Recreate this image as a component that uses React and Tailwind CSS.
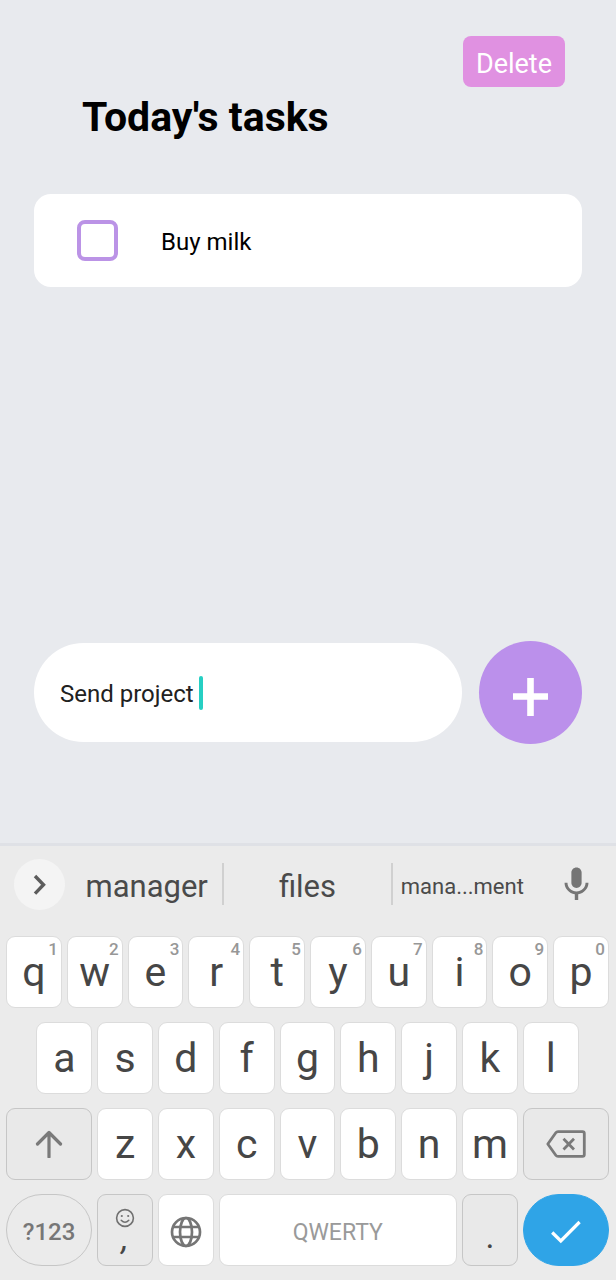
import React, { useState } from "react";
import { MdMic } from "react-icons/md";

const ROBOTO = "font-['Roboto',sans-serif]";

const topRow = ["q", "w", "e", "r", "t", "y", "u", "i", "o", "p"];
const homeRow = ["a", "s", "d", "f", "g", "h", "j", "k", "l"];
const bottomRow = ["z", "x", "c", "v", "b", "n", "m"];

function Key({ children, className = "col-span-2", tone = "light", label }) {
  const tones = {
    light: "rounded-[9px] border-[#dcdcdc] bg-white text-[#464646]",
    muted: "rounded-[9px] border-[#c6c6c6] bg-[#e9e9e9] text-[#7a7a7a]",
    pill: "rounded-full border-[#c6c6c6] bg-[#ebebeb] text-[#777777]",
    accent: "rounded-full border-[#2fa4e7] bg-[#2fa4e7] text-white",
  };
  return (
    <button
      type="button"
      aria-label={label}
      className={`relative flex h-[72px] items-center justify-center border ${tones[tone]} ${className}`}
    >
      {children}
    </button>
  );
}

function Letter({ char, hint, className }) {
  return (
    <Key className={className}>
      <span className="text-[41px] leading-[48px]">{char}</span>
      {hint && (
        <span className="absolute right-[3px] top-[2px] text-[17px] font-medium leading-5 text-[#979797]">
          {hint}
        </span>
      )}
    </Key>
  );
}

function Suggestions() {
  return (
    <div className="mb-[14px] flex h-[76px] items-center text-[31px] leading-10 text-[#4a4a4a]">
      <button
        type="button"
        aria-label="More"
        className="ml-[14px] mr-[6px] flex size-[51px] shrink-0 items-center justify-center rounded-full bg-[#f4f4f4]"
      >
        <svg width="51" height="51" viewBox="0 0 51 51" fill="none" aria-hidden="true">
          <path d="M21 17L29.5 25.8L21 34.6" stroke="#5c5c5c" strokeWidth="3.4" />
        </svg>
      </button>
      <button type="button" className="h-[42px] min-w-0 flex-[152] border-r-2 border-[#d0d0d0] pt-1">
        manager
      </button>
      <button type="button" className="h-[42px] min-w-0 flex-[167] border-r-2 border-[#d0d0d0] pt-1">
        files
      </button>
      <button type="button" className="h-[42px] min-w-0 flex-[140] pt-1 text-[22px]">
        mana...ment
      </button>
      <button
        type="button"
        aria-label="Voice input"
        className="ml-1 flex w-20 shrink-0 items-center justify-center text-[#757575]"
      >
        <MdMic size={41} />
      </button>
    </div>
  );
}

function Keyboard() {
  return (
    <section
      aria-label="Keyboard"
      className="border-t-[3px] border-[#dfe1e6] bg-[#ebebeb] pb-[14px]"
    >
      <Suggestions />
      <div className="grid grid-cols-[repeat(20,minmax(0,1fr))] gap-x-[5px] gap-y-[14px] pl-[6px] pr-[7px]">
        {topRow.map((char, i) => (
          <Letter key={char} char={char} hint={String((i + 1) % 10)} className="col-span-2" />
        ))}
        {homeRow.map((char, i) => (
          <Letter key={char} char={char} className={i === 0 ? "col-span-2 col-start-2" : "col-span-2"} />
        ))}
        <Key className="col-span-3 col-start-1" tone="muted" label="Shift">
          <svg width="28" height="28" viewBox="0 0 28 28" fill="none" aria-hidden="true">
            <path
              d="M14 27V3M2.5 14L14 2.5L25.5 14"
              stroke="currentColor"
              strokeWidth="3.2"
              strokeLinecap="round"
              strokeLinejoin="round"
            />
          </svg>
        </Key>
        {bottomRow.map((char) => (
          <Letter key={char} char={char} className="col-span-2" />
        ))}
        <Key className="col-span-3" tone="muted" label="Backspace">
          <svg width="40" height="28" viewBox="0 0 40 28" fill="none" aria-hidden="true">
            <path
              d="M12 1.7H36.5Q38.3 1.7 38.3 3.5V24.5Q38.3 26.3 36.5 26.3H12Q10.6 26.3 9.8 25.2L1.8 14L9.8 2.8Q10.6 1.7 12 1.7Z"
              stroke="currentColor"
              strokeWidth="2.8"
              strokeLinejoin="round"
            />
            <path d="M17.5 8.8L28 19.4M28 8.8L17.5 19.4" stroke="currentColor" strokeWidth="2.8" />
          </svg>
        </Key>
        <Key className="col-span-3 pt-1" tone="pill">
          <span className="text-[24px] font-medium leading-8">?123</span>
        </Key>
        <Key className="col-span-2 pt-1" tone="muted" label="Comma and emoji">
          <span className="flex flex-col items-center">
            <svg width="20" height="20" viewBox="0 0 20 20" fill="none" aria-hidden="true">
              <circle cx="10" cy="10" r="8.4" stroke="#707070" strokeWidth="1.6" />
              <circle cx="6.8" cy="8" r="1.1" fill="#707070" />
              <circle cx="13.2" cy="8" r="1.1" fill="#707070" />
              <path d="M6.2 12.3Q10 16.2 13.8 12.3" stroke="#707070" strokeWidth="1.5" strokeLinecap="round" />
            </svg>
            <span className="h-7 text-[34px] italic leading-5 text-[#464646]">,</span>
          </span>
        </Key>
        <Key className="col-span-2 pt-1" label="Change language">
          <svg width="32" height="32" viewBox="0 0 32 32" fill="none" stroke="#757575" strokeWidth="2.7" aria-hidden="true">
            <circle cx="16" cy="16" r="14" />
            <ellipse cx="16" cy="16" rx="6" ry="14" />
            <path d="M3 11H29M3 21H29" />
          </svg>
        </Key>
        <Key className="col-span-8 pt-[6px]">
          <span className="text-[23px] leading-8 text-[#9a9a9a]">QWERTY</span>
        </Key>
        <Key tone="muted">
          <span className="pt-3 text-[34px] leading-10 text-[#464646]">.</span>
        </Key>
        <Key className="col-span-3 pt-1" tone="accent" label="Done">
          <svg width="30" height="24" viewBox="0 0 30 24" fill="none" aria-hidden="true">
            <path d="M1.2 12.5L9.8 21L28.6 2" stroke="currentColor" strokeWidth="3.2" />
          </svg>
        </Key>
      </div>
    </section>
  );
}

export default function App() {
  const [task, setTask] = useState("Send project");
  const [done, setDone] = useState(false);

  return (
    <div className={`flex min-h-screen flex-col bg-[#e8eaee] text-black ${ROBOTO}`}>
      <main className="flex flex-1 flex-col px-[34px] pb-[99px] pt-9">
        <button
          type="button"
          className="mr-[17px] self-end rounded-lg bg-[#e091e1] px-[13px] pb-[7px] pt-3 text-[27px] leading-8 text-white"
        >
          Delete
        </button>
        <h1 className="ml-12 mt-[6px] text-[41px] font-bold leading-[48px]">Today's tasks</h1>
        <ul className="mt-[53px]">
          <li>
            <label className="flex items-center gap-[43px] rounded-[17px] bg-white px-[43px] py-[26px] text-[24px] leading-8">
              <input
                type="checkbox"
                checked={done}
                onChange={(e) => setDone(e.target.checked)}
                className="size-[41px] shrink-0 appearance-none rounded-lg border-4 border-[#bb93e6] bg-white checked:bg-[#bb93e6]"
              />
              <span className="pt-[2px]">Buy milk</span>
            </label>
          </li>
        </ul>
        <form
          className="mt-auto flex items-center gap-[17px]"
          onSubmit={(e) => e.preventDefault()}
        >
          <label className="flex h-[99px] min-w-0 flex-1 items-center gap-[5px] rounded-full bg-white px-[26px]">
            <input
              type="text"
              aria-label="New task"
              value={task}
              onChange={(e) => setTask(e.target.value)}
              className="field-sizing-content max-w-full bg-transparent pt-[2px] text-[24px] leading-8 text-[#212121] caret-transparent outline-none"
            />
            <span className="h-[34px] w-1 rounded-sm bg-[#26cfc3]" />
          </label>
          <button
            type="submit"
            aria-label="Add task"
            className="size-[103px] shrink-0 rounded-full bg-[#bb90eb]"
          >
            <svg width="103" height="103" viewBox="0 0 103 103" fill="none" aria-hidden="true">
              <path d="M51.5 37V75M34 55.5H69" stroke="#fff" strokeWidth="6.6" />
            </svg>
          </button>
        </form>
      </main>
      <Keyboard />
    </div>
  );
}
